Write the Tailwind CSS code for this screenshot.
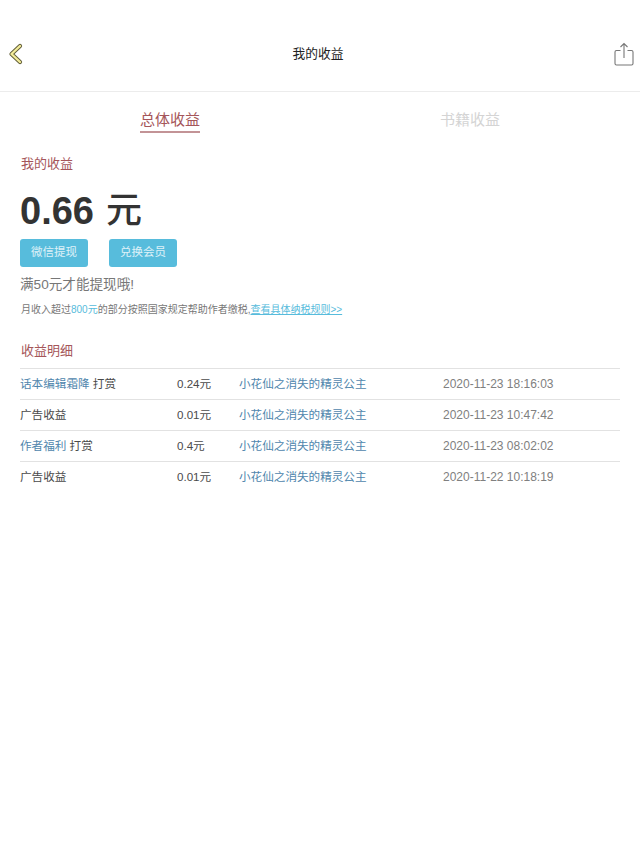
<!DOCTYPE html>
<html lang="zh">
<head>
  <meta charset="UTF-8" />
  <title>我的收益</title>
  <script src="https://cdn.jsdelivr.net/npm/@tailwindcss/browser@4"></script>
</head>
<body class="bg-white font-['Liberation_Sans','Noto_Sans_CJK_SC',sans-serif] text-[#333]">
  <!-- 顶部导航 -->
  <header class="h-[92px] border-b border-[#ececec] flex items-center justify-between pl-[8px] pr-[6px] pt-[16px]">
    <svg width="16" height="22" viewBox="0 0 16 22" fill="none">
      <path d="M12 3 L3.5 11 L12 19" stroke="#5f5b36" stroke-width="4.2" stroke-linecap="round" stroke-linejoin="round" />
      <path d="M12 3 L3.5 11 L12 19" stroke="#f3ec9a" stroke-width="2.4" stroke-linecap="round" stroke-linejoin="round" />
    </svg>
    <h1 class="text-[12.75px] text-[#222]">我的收益</h1>
    <svg width="22" height="24" viewBox="-2 0 22 24" fill="none" stroke="#777" stroke-width="1.1">
      <path d="M6.5 8.5 H2.5 Q1 8.5 1 10 V21.5 Q1 23 2.5 23 H17.5 Q19 23 19 21.5 V10 Q19 8.5 17.5 8.5 H13.5" />
      <path d="M10 16 V1.5 M6.5 5 L10 1.5 L13.5 5" />
    </svg>
  </header>

  <!-- 标签 -->
  <nav class="grid grid-cols-[140px_60px_240px_60px] h-[41px] pt-[17px] text-[15px] leading-[22px]">
    <span></span>
    <span class="text-[#a5565a] border-b-2 border-[#c39396] h-[24px] whitespace-nowrap">总体收益</span>
    <span></span>
    <span class="text-[#d4d4d4] whitespace-nowrap">书籍收益</span>
  </nav>

  <main class="px-[20px]">
    <h2 class="text-[13px] leading-[20px] text-[#a5565a] mt-[21px] pl-px">我的收益</h2>
    <div class="mt-[14px] h-[46px] flex items-center leading-none">
      <span class="text-[38px] font-bold">0.66</span>
      <span class="text-[36px] font-medium ml-[12px]">元</span>
    </div>
    <div class="flex gap-[21px] mt-[5px]">
      <button class="w-[68px] h-[28px] rounded-[3px] bg-[#57bcdc] text-white/80 text-[11.5px]">微信提现</button>
      <button class="w-[68px] h-[28px] rounded-[3px] bg-[#57bcdc] text-white/80 text-[11.5px]">兑换会员</button>
    </div>
    <p class="mt-[8px] text-[13.6px] leading-[20px] text-[#777]">满50元才能提现哦!</p>
    <p class="mt-[7px] text-[10px] leading-[16px] text-[#777] whitespace-nowrap pl-px">月收入超过<span class="text-[#57bcdc]">800元</span>的部分按照国家规定帮助作者缴税,<a class="text-[#57bcdc] underline">查看具体纳税规则&gt;&gt;</a></p>

    <h2 class="text-[13px] leading-[20px] text-[#a5565a] mt-[23px] pl-px">收益明细</h2>

    <!-- 明细列表 -->
    <ul class="mt-[7px] text-[11.6px] leading-[30px] text-[#4a4a4a]">
      <li class="grid grid-cols-[157px_62px_204px_1fr] h-[31px] border-t border-[#e2e2e2]">
        <span><a class="text-[#4f86ad]">话本编辑霜降</a> 打赏</span>
        <span>0.24元</span>
        <a class="text-[#4f86ad]">小花仙之消失的精灵公主</a>
        <span class="text-[#808080] text-[12px]">2020-11-23 18:16:03</span>
      </li>
      <li class="grid grid-cols-[157px_62px_204px_1fr] h-[31px] border-t border-[#e2e2e2]">
        <span>广告收益</span>
        <span>0.01元</span>
        <a class="text-[#4f86ad]">小花仙之消失的精灵公主</a>
        <span class="text-[#808080] text-[12px]">2020-11-23 10:47:42</span>
      </li>
      <li class="grid grid-cols-[157px_62px_204px_1fr] h-[31px] border-t border-[#e2e2e2]">
        <span><a class="text-[#4f86ad]">作者福利</a> 打赏</span>
        <span>0.4元</span>
        <a class="text-[#4f86ad]">小花仙之消失的精灵公主</a>
        <span class="text-[#808080] text-[12px]">2020-11-23 08:02:02</span>
      </li>
      <li class="grid grid-cols-[157px_62px_204px_1fr] h-[31px] border-t border-[#e2e2e2]">
        <span>广告收益</span>
        <span>0.01元</span>
        <a class="text-[#4f86ad]">小花仙之消失的精灵公主</a>
        <span class="text-[#808080] text-[12px]">2020-11-22 10:18:19</span>
      </li>
    </ul>
  </main>
</body>
</html>
